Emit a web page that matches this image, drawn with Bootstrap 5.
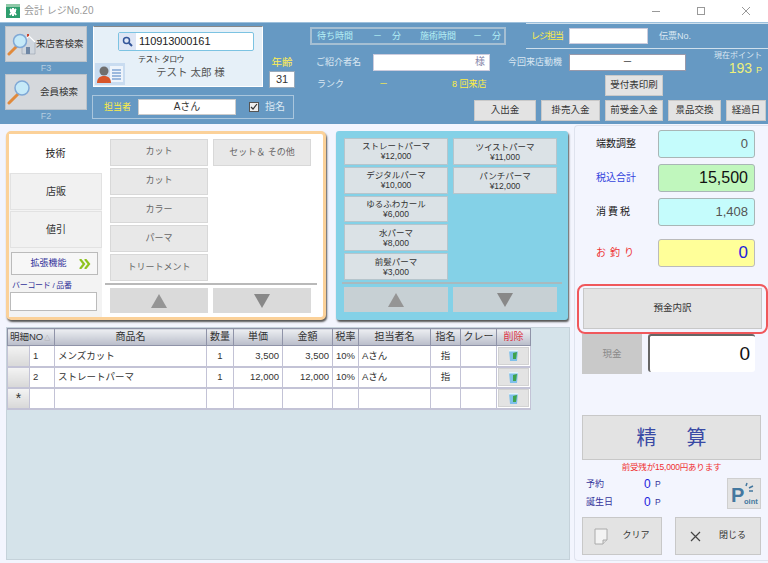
<!DOCTYPE html>
<html lang="ja">
<head>
<meta charset="UTF-8">
<title>会計 レジNo.20</title>
<link href="https://cdn.jsdelivr.net/npm/bootstrap@5.3.0/dist/css/bootstrap.min.css" rel="stylesheet">
<script src="https://cdn.jsdelivr.net/npm/bootstrap@5.3.0/dist/js/bootstrap.bundle.min.js"></script>
<style>
html, body { margin: 0; height: 563px; overflow: hidden; }
body { font-family: "Liberation Sans", "Noto Sans CJK JP", sans-serif; font-size: 10px; color: #333; background: #f3f5fe; line-height: 1.2; }
.app-win { width: 768px; height: 563px; display: flex; flex-direction: column; }
.title-bar { height: 22px; background: #fff; color: #999; font-size: 10px; padding: 0 0 0 6px; flex: none; }
.win-btn { width: 45px; display: flex; justify-content: center; }

.head-bar { height: 102px; background: #6699c3; flex: none; padding: 3px 0 0 5px; border-top: 1px solid #9dc0dc; }
.gray-btn { background: #e3e3e3; border: 1px solid #c9c9c9; border-radius: 0; color: #333; font-size: 10px; padding: 0; display: flex; align-items: center; justify-content: center; line-height: 1.1; white-space: nowrap; }
.search-btn { width: 82px; height: 36px; background: #d5d8dc; border-color: #bcc3ca; font-size: 9.5px; justify-content: flex-start; padding-left: 1px; }
.fkey { color: #b5cde0; text-align: center; height: 12px; line-height: 12px; font-size: 9px; width: 82px; }
.cust-card { width: 170px; height: 61px; margin-left: 1px; background: #e6f0f8; border: 1px solid #fff; border-top: 1px solid #888; position: relative; flex: none; }
.id-box { width: 136px; height: 19px; margin: 5px 0 0 24px; background: #fff; border: 1px solid #7cc3e2; border-radius: 2px; font-size: 11px; color: #222; letter-spacing: -.1px; }
.id-mag { width: 17px; background: #dfe6f5; height: 100%; display: flex; align-items: center; justify-content: center; margin-right: 3px; }
.kana { font-size: 8px; margin: 4px 0 0 44px; line-height: 10px; letter-spacing: -.6px; }
.cust-name { font-size: 10.5px; margin: 0 0 0 62px; line-height: 14px; color: #555; }
.card-ico { position: absolute; left: 1px; bottom: 1px; }
.age-lbl { color: #ffee55; font-size: 10.5px; text-align: center; line-height: 12px; margin-top: 30px; }
.age-box { width: 26px; height: 17px; background: #fff; border: 1px solid #9ab; font-size: 11px; color: #333; text-align: center; line-height: 15px; margin-top: 3px; }
.staff-box { width: 202px; height: 24px; border: 1px solid #a9c6dd; margin-top: 7px; padding: 0 0 0 11px; }
.yel { color: #ffee44; }
.staff-name { width: 98px; height: 16px; background: #fff; border: 1px solid #ccc; text-align: center; line-height: 14px; margin: 0 13px 0 7px; color: #333; }
.chk-box { width: 10px; height: 10px; border: 1px solid #555; background: #eee; margin-right: 6px; display: flex; align-items: center; justify-content: center; }
.lt { color: #dbe8f2; white-space: nowrap; }
.aq { color: #b5f0f5; font-size: 9px; white-space: nowrap; }
.wait-box { width: 196px; height: 18px; border: 2px solid #a5bfd3; padding: 0 0 0 5px; margin-top: 1px; flex: none; }
.top-lines { width: 242px; height: 26px; margin-left: 20px; margin-top: -3px; border-top: 1px solid #cfe0ed; border-bottom: 1px solid #cfe0ed; padding-left: 5px; flex: none; }
.w-input { background: #fff; border: 1px solid #ccd; height: 16px; text-align: center; line-height: 14px; color: #333; flex: none; }
.ref-input { width: 117px; text-align: right; padding-right: 4px; color: #88a; }
.pt-val { color: #eef07a; font-size: 14px; line-height: 14px; }
.foot-btn { height: 21px; font-size: 9.5px; flex: none; }

.left-pane { width: 574px; flex: none; display: flex; flex-direction: column; }
.tech-panel { width: 320px; height: 189px; background: #fff; border: 3px solid #fbd199; border-radius: 5px; box-shadow: 1px 2px 2px #555; flex: none; }
.tab-col { width: 93px; background: #f3f3f3; padding-left: 1px; flex: none; }
.tab-on { height: 39px; margin-left: -1px; background: #fff; display: flex; align-items: center; justify-content: center; font-size: 10px; color: #222; }
.tab-off { height: 37px; margin-bottom: 1px; background: #f1f1f1; border: 1px solid #e2e2e2; display: flex; align-items: center; justify-content: center; font-size: 10px; color: #333; }
.ext-btn { width: 87px; height: 23px; margin: 4px 0 0 1px; background: #f7f7f7; border: 1px solid #bbb; color: #33339a; font-size: 9px; gap: 12px; padding-left: 12px; }
.bar-lbl { color: #33339a; font-size: 8px; margin-top: 5px; line-height: 11px; padding-left: 2px; letter-spacing: -.3px; }
.bar-in { width: 87px; height: 19px; background: #fff; border: 1px solid #bbb; margin-top: 1px; }
.menu-col { display: flex; flex-direction: column; gap: 2px; }
.m-btn { width: 98px; height: 27px; background: #e8e8e8; border: 1px solid #d8d8d8; color: #666; font-size: 9px; }
.sep-line { height: 2px; background: #b9b9b9; }
.arrow-btn { height: 25px; background: #dadada; border: 0; }
.arr-up { width: 0; height: 0; border-left: 8px solid transparent; border-right: 8px solid transparent; border-bottom: 14px solid #959595; }
.arr-dn { width: 0; height: 0; border-left: 8px solid transparent; border-right: 8px solid transparent; border-top: 14px solid #888; }
.perm-panel { width: 232px; height: 189px; background: #84d1e7; border-radius: 3px; box-shadow: 1px 2px 2px #555; padding: 7px 8px 0; margin-left: 10px; flex: none; }
.p-btn { width: 104px; height: 27px; background: #dbe2e6; border: 1px solid #b6c5cc; color: #333; font-size: 8.5px; flex-direction: column; line-height: 10px; }

.grid-wrap { margin: 7px 0 3px 6px; width: 564px; flex: 1; background: #d5e3ea; border: 1px solid #c5d2da; }
.meisai { width: 523px; table-layout: fixed; border-collapse: collapse; font-size: 9.5px; margin: 0; }
.meisai th { height: 17px; padding: 0; font-weight: normal; text-align: center; color: #333; background: linear-gradient(#eceef2, #b9bdca); border: 1px solid #8f93a8; font-size: 10px; white-space: nowrap; overflow: hidden; }
.meisai th.th-no { font-size: 9.5px; text-align: left; padding-left: 2px; }
.sort-mark { font-size: 6px; color: #999; margin-left: 1px; }
.meisai td { height: 21px; padding: 0 3px; background: #fff; border: 1px solid #c3c3d6; border-bottom: 2px solid #c3c3d6; color: #333; vertical-align: middle; white-space: nowrap; }
.meisai td.row-h { background: linear-gradient(#f3f3f3, #d8d8d8); text-align: center; padding: 0; }
.del-btn { width: 31px; height: 18px; margin: 0 auto; background: #e3e3e3; border: 1px solid #d2d2d2; display: flex; align-items: center; justify-content: center; }

.right-pane { width: 194px; height: 436px; margin-top: 1px; border: 1px solid #dfe3ee; border-right: 0; border-radius: 4px 0 0 4px; padding: 4px 0 0 7px; }
.amt-row { height: 28px; margin-bottom: 6px; }
.amt-lbl { width: 76px; padding-left: 14px; font-size: 10px; color: #222; white-space: nowrap; }
.amt-box { width: 97px; height: 100%; border: 1px solid #a9b6b6; border-radius: 3px; text-align: right; padding-right: 6px; font-size: 13px; line-height: 25px; color: #555; background: #c5fcfc; }
.red-ring { width: 191px; height: 50px; margin: 17px 0 0 -5px; border: 2px solid #f0585c; border-radius: 8px; padding: 2px 4px; }
.ring-btn { width: 179px; height: 41px; background: #e3e3e3; border: 1px solid #c8c8c8; color: #333; font-size: 9.5px; }
.cash-lbl { width: 60px; height: 40px; background: #c9c9c9; color: #888; display: flex; align-items: center; justify-content: center; font-size: 9.5px; }
.cash-box { width: 107px; height: 38px; margin-left: 6px; background: #fff; border-top: 2px solid #666; border-left: 2px solid #666; border-radius: 3px; font-size: 19px; line-height: 35px; text-align: right; padding-right: 5px; color: #111; }
.seisan { width: 179px; height: 45px; margin-top: 41px; background: #e3e3e3; border: 1px solid #c8c8c8; color: #3a4aa5; font-size: 20px; gap: 30px; }
.zan { color: #f03030; font-size: 8.5px; text-align: center; width: 179px; height: 12px; line-height: 12px; margin-top: 1px; letter-spacing: -.2px; }
.pt-l { color: #33339a; width: 62px; padding-left: 4px; font-size: 9px; white-space: nowrap; }
.pt-n { color: #2222dd; font-size: 12px; width: 11px; }
.pt-u { color: #33339a; font-size: 8.5px; }
.pt-btn { width: 34px; height: 31px; background: #e3e3e3; border: 1px solid #cfcfcf; position: relative; overflow: hidden; flex: none; }
.pt-big { position: absolute; left: 3px; top: 6px; font: bold 20px/20px "Liberation Sans", sans-serif; color: #44789f; }
.pt-sm { position: absolute; left: 16px; top: 18px; font: bold 7.5px/9px "Liberation Sans", sans-serif; color: #44789f; }
.low-btn { height: 38px; background: #e3e3e3; border: 1px solid #c8c8c8; font-size: 9px; gap: 10px; }
</style>
</head>
<body>
<div class="app-win">
  <div class="title-bar d-flex align-items-center">
    <svg width="14" height="14" viewBox="0 0 14 14" class="me-1"><rect width="14" height="14" fill="#2e9e6e"/><rect y="0" width="14" height="3" fill="#8fc9a8"/><path d="M7 4v8M4 7h6M4 5l2 2M10 5L8 7M4 11l2-3M10 11L8 8" stroke="#fff" stroke-width="2"/></svg>
    <span>会計 レジNo.20</span>
    <div class="ms-auto d-flex">
      <div class="win-btn"><svg width="10" height="10"><path d="M1 5.500h8" stroke="#999"/></svg></div>
      <div class="win-btn"><svg width="10" height="10"><rect x="1.500" y="1.500" width="7" height="7" fill="none" stroke="#999"/></svg></div>
      <div class="win-btn"><svg width="10" height="10"><path d="M1 1l8 8M9 1l-8 8" stroke="#999"/></svg></div>
    </div>
  </div>

  <div class="head-bar d-flex">
    <div style="width:87px;flex:none">
      <button class="gray-btn search-btn">
        <svg width="29" height="24" viewBox="0 0 29 24"><path d="M15 11l7-7 6 6v12H15z" fill="#cfd6de" stroke="#8a97a6" stroke-width=".5"/><path d="M16 10l6-6 6 6" fill="none" stroke="#fff" stroke-width="1.200"/><path d="M20 5V2h2v2z" fill="#c8452f"/><rect x="19" y="15" width="4" height="7" fill="#6f87a5"/><path d="M2 22l8-8" stroke="#e08a3c" stroke-width="3" stroke-linecap="round"/><circle cx="13" cy="9" r="6.500" fill="#c5e9f8" stroke="#7fa8d6" stroke-width="1.500"/></svg>
        <span class="ms-0">来店客検索</span>
      </button>
      <div class="fkey">F3</div>
      <button class="gray-btn search-btn">
        <svg width="26" height="26" viewBox="0 0 26 26"><path d="M2 24l9-9" stroke="#e08a3c" stroke-width="3" stroke-linecap="round"/><circle cx="15" cy="9" r="7" fill="#c5e9f8" stroke="#7fa8d6" stroke-width="1.500"/></svg>
        <span style="margin-left:7px">会員検索</span>
      </button>
      <div class="fkey">F2</div>
    </div>
    <div style="width:218px;flex:none">
      <div class="d-flex">
        <div class="cust-card">
          <div class="id-box d-flex align-items-center">
            <span class="id-mag"><svg width="11" height="11" viewBox="0 0 11 11"><circle cx="4.500" cy="4.500" r="3" fill="none" stroke="#335599" stroke-width="1.500"/><path d="M7 7l3 3" stroke="#335599" stroke-width="2"/></svg></span>110913000161
          </div>
          <div class="kana">テスト タロウ</div>
          <div class="cust-name">テスト 太郎 様</div>
          <svg class="card-ico" width="30" height="22" viewBox="0 0 30 22"><rect width="30" height="22" fill="#c9dcf0"/><rect x="15" y="3" width="13" height="16" fill="#eef4fb"/><path d="M17 7h9M17 10h9M17 13h9M17 16h9" stroke="#4a7fc0"/><circle cx="9" cy="8" r="4.500" fill="#6f6f6f"/><path d="M2 20c0-6 4-7 7-7s7 1 7 7z" fill="#d8562a"/></svg>
        </div>
        <div style="margin-left:6px">
          <div class="age-lbl">年齢</div>
          <div class="age-box">31</div>
        </div>
      </div>
      <div class="staff-box d-flex align-items-center">
        <span class="yel" style="font-size:9px">担当者</span>
        <div class="staff-name">Aさん</div>
        <span class="chk-box"><svg width="8" height="8"><path d="M1 4l2 2 4-5" fill="none" stroke="#333" stroke-width="1.200"/></svg></span>
        <span class="lt">指名</span>
      </div>
    </div>
    <div class="flex-grow-1">
      <div class="d-flex">
        <div class="wait-box d-flex align-items-center aq">
          <span>待ち時間</span><span style="margin-left:20px">－</span><span style="margin-left:10px">分</span>
          <span style="margin-left:19px">施術時間</span><span style="margin-left:17px">－</span><span style="margin-left:10px">分</span>
        </div>
        <div class="top-lines d-flex align-items-center">
          <span class="yel" style="width:38px;font-size:9px;letter-spacing:-1px;white-space:nowrap">レジ担当</span>
          <div class="w-input" style="width:79px"></div>
          <span class="lt" style="margin-left:11px;font-size:9px">伝票No.</span>
        </div>
      </div>
      <div class="d-flex align-items-start" style="margin-top:5px;height:20px">
        <span class="lt" style="width:51px;margin:3px 0 0 6px;font-size:9px">ご紹介者名</span>
        <div class="w-input ref-input" style="margin-left:6px;height:17px">様</div>
        <span class="lt" style="margin:3px 0 0 18px;width:61px;font-size:9px">今回来店動機</span>
        <div class="w-input" style="width:117px;height:17px;border-color:#99a">－</div>
        <div class="ms-auto text-end" style="margin-top:-3px;margin-right:6px">
          <div class="lt" style="font-size:8px">現在ポイント</div>
          <div class="pt-val">193 <span style="font-size:9px">P</span></div>
        </div>
      </div>
      <div class="d-flex align-items-start" style="height:25px;margin-top:1px">
        <span class="lt" style="width:62px;margin:4px 0 0 7px;font-size:9px">ランク</span>
        <span class="yel" style="margin-top:4px;font-size:9px">－</span>
        <span class="yel" style="margin:4px 0 0 64px;font-size:9px">8 回来店</span>
        <button class="gray-btn foot-btn ms-auto" style="width:58px;margin:0 105px 0 0">受付表印刷</button>
      </div>
      <div class="d-flex justify-content-end" style="gap:5px;padding-right:2px">
        <button class="gray-btn foot-btn" style="width:62px">入出金</button>
        <button class="gray-btn foot-btn" style="width:59px">掛売入金</button>
        <button class="gray-btn foot-btn" style="width:58px">前受金入金</button>
        <button class="gray-btn foot-btn" style="width:53px">景品交換</button>
        <button class="gray-btn foot-btn" style="width:40px">経過日</button>
      </div>
    </div>
  </div>

  <div class="d-flex flex-grow-1">
    <div class="left-pane">
      <div class="d-flex" style="margin:7px 0 0 6px">
        <div class="tech-panel d-flex">
          <div class="tab-col">
            <div class="tab-on">技術</div>
            <div class="tab-off">店販</div>
            <div class="tab-off">値引</div>
            <button class="gray-btn ext-btn"><span>拡張機能</span><svg width="12" height="10" viewBox="0 0 12 10"><path d="M1 0l4 5-4 5M6 0l4 5-4 5" fill="none" stroke="#8fc31f" stroke-width="2.200"/></svg></button>
            <div class="bar-lbl">バーコード / 品番</div>
            <div class="bar-in"></div>
          </div>
          <div class="flex-grow-1" style="padding:5px 0 0 3px">
            <div class="d-flex" style="gap:5px;padding-left:5px;height:142px">
              <div class="menu-col">
                <button class="gray-btn m-btn">カット</button>
                <button class="gray-btn m-btn">カット</button>
                <button class="gray-btn m-btn">カラー</button>
                <button class="gray-btn m-btn">パーマ</button>
                <button class="gray-btn m-btn">トリートメント</button>
              </div>
              <div class="menu-col">
                <button class="gray-btn m-btn">セット＆ その他</button>
              </div>
            </div>
            <div class="sep-line" style="margin:2px 6px 3px 0"></div>
            <div class="d-flex" style="gap:5px;padding-left:5px">
              <button class="gray-btn arrow-btn" style="width:98px"><span class="arr-up"></span></button>
              <button class="gray-btn arrow-btn" style="width:98px"><span class="arr-dn"></span></button>
            </div>
          </div>
        </div>
        <div class="perm-panel">
          <div class="d-flex" style="gap:5px;height:142px">
            <div class="menu-col">
              <button class="gray-btn p-btn"><span>ストレートパーマ</span><span>¥12,000</span></button>
              <button class="gray-btn p-btn"><span>デジタルパーマ</span><span>¥10,000</span></button>
              <button class="gray-btn p-btn"><span>ゆるふわカール</span><span>¥6,000</span></button>
              <button class="gray-btn p-btn"><span>水パーマ</span><span>¥8,000</span></button>
              <button class="gray-btn p-btn"><span>前髪パーマ</span><span>¥3,000</span></button>
            </div>
            <div class="menu-col">
              <button class="gray-btn p-btn"><span>ツイストパーマ</span><span>¥11,000</span></button>
              <button class="gray-btn p-btn"><span>パンチパーマ</span><span>¥12,000</span></button>
            </div>
          </div>
          <div class="sep-line" style="margin:2px -2px 3px -2px;background:#a9b9be"></div>
          <div class="d-flex" style="gap:5px">
            <button class="gray-btn arrow-btn" style="width:104px;background:#c7d0d4"><span class="arr-up"></span></button>
            <button class="gray-btn arrow-btn" style="width:104px;background:#c7d0d4"><span class="arr-dn"></span></button>
          </div>
        </div>
      </div>

      <div class="grid-wrap">
        <table class="meisai">
          <colgroup><col style="width:22px"><col style="width:25px"><col style="width:152px"><col style="width:27px"><col style="width:49px"><col style="width:50px"><col style="width:26px"><col style="width:72px"><col style="width:30px"><col style="width:36px"><col style="width:34px"></colgroup>
          <thead>
            <tr><th colspan="2" class="th-no">明細NO<span class="sort-mark">△</span></th><th>商品名</th><th>数量</th><th>単価</th><th>金額</th><th>税率</th><th>担当者名</th><th>指名</th><th>クレー</th><th class="text-danger">削除</th></tr>
          </thead>
          <tbody>
            <tr><td class="row-h"></td><td>1</td><td>メンズカット</td><td class="text-center">1</td><td class="text-end">3,500</td><td class="text-end">3,500</td><td class="text-center px-0">10%</td><td>Aさん</td><td class="text-center">指</td><td></td><td class="px-0"><div class="del-btn"><svg width="11" height="13" viewBox="0 0 11 13"><path d="M1 1h9l-1 11H2z" fill="#7fc0ea"/><path d="M1 1h9v1.500H1z" fill="#e4f3fb"/><path d="M5 4l4-1-1 7H5z" fill="#3fa34d"/></svg></div></td></tr>
            <tr><td class="row-h"></td><td>2</td><td>ストレートパーマ</td><td class="text-center">1</td><td class="text-end">12,000</td><td class="text-end">12,000</td><td class="text-center px-0">10%</td><td>Aさん</td><td class="text-center">指</td><td></td><td class="px-0"><div class="del-btn"><svg width="11" height="13" viewBox="0 0 11 13"><path d="M1 1h9l-1 11H2z" fill="#7fc0ea"/><path d="M1 1h9v1.500H1z" fill="#e4f3fb"/><path d="M5 4l4-1-1 7H5z" fill="#3fa34d"/></svg></div></td></tr>
            <tr><td class="row-h" style="font-size:14px">*</td><td></td><td></td><td></td><td></td><td></td><td></td><td></td><td></td><td></td><td class="px-0"><div class="del-btn"><svg width="11" height="13" viewBox="0 0 11 13"><path d="M1 1h9l-1 11H2z" fill="#7fc0ea"/><path d="M1 1h9v1.500H1z" fill="#e4f3fb"/><path d="M5 4l4-1-1 7H5z" fill="#3fa34d"/></svg></div></td></tr>
          </tbody>
        </table>
      </div>
    </div>

    <div class="right-pane">
      <div class="d-flex align-items-center amt-row">
        <span class="amt-lbl">端数調整</span><div class="amt-box">0</div>
      </div>
      <div class="d-flex align-items-center amt-row">
        <span class="amt-lbl" style="color:#3344dd">税込合計</span><div class="amt-box" style="background:#c0f7bd;color:#111;font-size:16px">15,500</div>
      </div>
      <div class="d-flex align-items-center amt-row" style="margin-bottom:13px">
        <span class="amt-lbl" style="letter-spacing:2px">消費税</span><div class="amt-box">1,408</div>
      </div>
      <div class="d-flex align-items-center amt-row" style="margin:0">
        <span class="amt-lbl" style="color:#ee3333;letter-spacing:4px">お釣り</span><div class="amt-box" style="background:#ffff99;color:#2222dd;font-size:17px;border-color:#bbb">0</div>
      </div>
      <div class="red-ring"><button class="gray-btn ring-btn">預金内訳</button></div>
      <div class="d-flex">
        <div class="cash-lbl">現金</div><div class="cash-box">0</div>
      </div>
      <button class="gray-btn seisan"><span>精</span><span>算</span></button>
      <div class="zan">前受残が15,000円あります</div>
      <div class="d-flex" style="width:179px;margin-top:5px">
        <div class="flex-grow-1" style="margin-top:-3px">
          <div class="d-flex align-items-center" style="height:18px"><span class="pt-l">予約</span><span class="pt-n">0</span><span class="pt-u">P</span></div>
          <div class="d-flex align-items-center" style="height:18px"><span class="pt-l">誕生日</span><span class="pt-n">0</span><span class="pt-u">P</span></div>
        </div>
        <div class="pt-btn"><span class="pt-big">P</span><span class="pt-sm">oint</span>
          <svg width="12" height="12" viewBox="0 0 12 12" style="position:absolute;left:15px;top:3px"><path d="M3 4l1-3M6 6l4-2M6 9h4" stroke="#44789f" stroke-width="1.500"/></svg>
        </div>
      </div>
      <div class="d-flex" style="width:179px;margin-top:6px;gap:13px">
        <button class="gray-btn low-btn" style="width:80px">
          <svg width="14" height="17" viewBox="0 0 14 17"><path d="M1 1h12v11l-4 4H1z" fill="#f3f3f3" stroke="#aaa"/><path d="M13 12H9v4" fill="#ddd" stroke="#aaa"/></svg><span class="ms-1">クリア</span></button>
        <button class="gray-btn low-btn" style="width:86px">
          <svg width="11" height="11" viewBox="0 0 11 11"><path d="M1 1l9 9M10 1l-9 9" stroke="#444" stroke-width="1.200"/></svg><span class="ms-2">閉じる</span></button>
      </div>
    </div>
  </div>
</div>
</body>
</html>
